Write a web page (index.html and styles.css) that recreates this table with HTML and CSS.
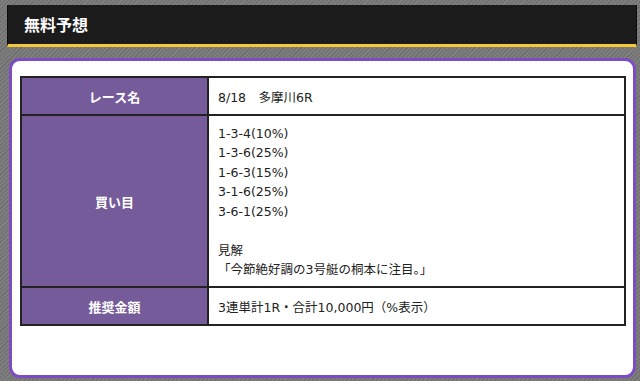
FILE: index.html
```html
<!DOCTYPE html>
<html lang="ja">
<head>
<meta charset="utf-8">
<link rel="stylesheet" href="styles.css">
</head>
<body>
<div class="page">
  <div class="head">
    <h2 class="head-title">無料予想</h2>
  </div>
  <div class="card">
    <table class="yoso">
      <tr class="row-short">
        <th>レース名</th>
        <td>8/18　多摩川6R</td>
      </tr>
      <tr class="row-tall">
        <th>買い目</th>
        <td>
          <div class="lines">
            <div>1-3-4(10%)</div>
            <div>1-3-6(25%)</div>
            <div>1-6-3(15%)</div>
            <div>3-1-6(25%)</div>
            <div>3-6-1(25%)</div>
            <div class="blank">&nbsp;</div>
            <div>見解</div>
            <div>「今節絶好調の3号艇の桐本に注目。」</div>
          </div>
        </td>
      </tr>
      <tr class="row-short">
        <th>推奨金額</th>
        <td>3連単計1R・合計10,000円（%表示）</td>
      </tr>
    </table>
  </div>
</div>
</body>
</html>
```
FILE: styles.css
```css
* { box-sizing: border-box; }
html, body {
  margin: 0;
  padding: 0;
}
body {
  width: 640px;
  height: 381px;
  overflow: hidden;
  font-family: "Liberation Sans", "Noto Sans CJK JP", sans-serif;
  background-color: #787878;
  background-image: repeating-linear-gradient(135deg, #727272 0px, #727272 1.5px, #7f7f7f 1.5px, #7f7f7f 3px);
}
.page {
  padding-top: 5px;
}
.head {
  margin: 0 3px 0 7px;
  height: 42px;
  background: #1b1b1b;
  border-left: 1px solid #0c0c0c;
  border-right: 1px solid #0c0c0c;
  border-bottom: 3px solid #f4c935;
  display: flex;
  align-items: center;
  padding-left: 16px;
  padding-bottom: 1px;
}
.head-title {
  margin: 0;
  color: #fff;
  font-size: 16px;
  font-weight: bold;
  font-family: "Noto Sans CJK JP", sans-serif;
}
.card {
  margin: 11px 0 0 9px;
  width: 627px;
  height: 320px;
  background: #fff;
  border: 3px solid #7b4cc2;
  border-radius: 11px;
  padding: 15px 7px 0 8px;
}
.yoso {
  width: 606px;
  border-collapse: collapse;
  border: 2px solid #222;
  font-size: 13px;
  color: #222;
}
.yoso th, .yoso td {
  border: 2px solid #222;
}
.yoso th {
  width: 187px;
  background: #765b9a;
  color: #fff;
  font-weight: bold;
  font-family: "Noto Sans CJK JP", sans-serif;
  font-size: 13px;
  text-align: center;
  padding: 0;
}
.yoso td {
  padding: 0 0 0 9px;
  text-align: left;
  vertical-align: middle;
  font-family: "DejaVu Sans", "Noto Sans CJK JP", sans-serif;
  font-size: 12.5px;
}
.row-short { height: 38px; }
.row-tall { height: 172px; }
.lines {
  line-height: 19.5px;
  padding: 1px 0 0;
}
```
